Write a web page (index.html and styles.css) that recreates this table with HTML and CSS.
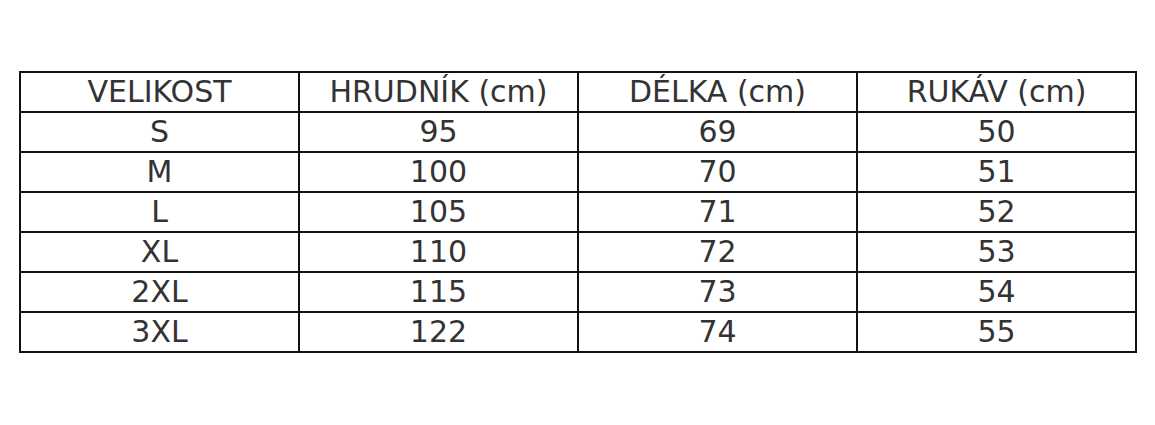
FILE: index.html
```html
<!DOCTYPE html>
<html lang="cs">
<head>
<meta charset="utf-8">
<link rel="stylesheet" href="styles.css">
</head>
<body>
<div class="wrap">
<table class="sizes">
<thead>
<tr><th>VELIKOST</th><th>HRUDNÍK (cm)</th><th>DÉLKA (cm)</th><th>RUKÁV (cm)</th></tr>
</thead>
<tbody>
<tr><td>S</td><td>95</td><td>69</td><td>50</td></tr>
<tr><td>M</td><td>100</td><td>70</td><td>51</td></tr>
<tr><td>L</td><td>105</td><td>71</td><td>52</td></tr>
<tr><td>XL</td><td>110</td><td>72</td><td>53</td></tr>
<tr><td>2XL</td><td>115</td><td>73</td><td>54</td></tr>
<tr><td>3XL</td><td>122</td><td>74</td><td>55</td></tr>
</tbody>
</table>
</div>
</body>
</html>
```

FILE: styles.css
```css
html, body {
  margin: 0;
  background: #fff;
}
.wrap {
  padding: 71px 0 0 19px;
}
.sizes {
  border-collapse: collapse;
  width: 1118px;
  table-layout: fixed;
  font-family: "DejaVu Sans", sans-serif;
  font-size: 30px;
  color: #333;
}
.sizes th,
.sizes td {
  border: 2px solid #111;
  height: 38px;
  padding: 0;
  line-height: 36px;
  text-align: center;
  font-weight: normal;
  vertical-align: middle;
}
```
